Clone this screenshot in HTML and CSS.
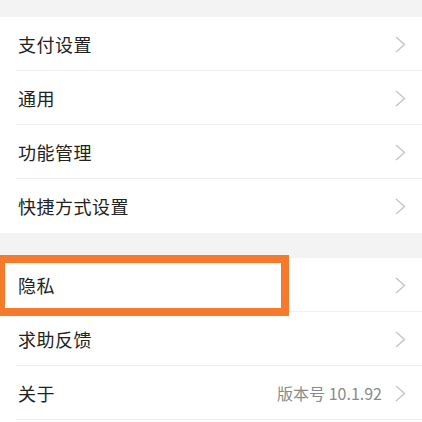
FILE: index.html
```html
<!DOCTYPE html>
<html lang="zh-CN">
<head>
<meta charset="utf-8">
<link rel="stylesheet" href="styles.css">
</head>
<body>
<div class="page">
  <div class="gap top"></div>
  <div class="group">
    <div class="row"><span class="label">支付设置</span><span class="right"><svg class="chev" viewBox="0 0 11 17"><path d="M1 1l8.5 7.5L1 16"/></svg></span></div>
    <div class="row"><span class="label">通用</span><span class="right"><svg class="chev" viewBox="0 0 11 17"><path d="M1 1l8.5 7.5L1 16"/></svg></span></div>
    <div class="row"><span class="label">功能管理</span><span class="right"><svg class="chev" viewBox="0 0 11 17"><path d="M1 1l8.5 7.5L1 16"/></svg></span></div>
    <div class="row"><span class="label">快捷方式设置</span><span class="right"><svg class="chev" viewBox="0 0 11 17"><path d="M1 1l8.5 7.5L1 16"/></svg></span></div>
  </div>
  <div class="gap mid"></div>
  <div class="group">
    <div class="row highlight"><span class="label">隐私</span><span class="right"><svg class="chev" viewBox="0 0 11 17"><path d="M1 1l8.5 7.5L1 16"/></svg></span><span class="mark"></span></div>
    <div class="row"><span class="label">求助反馈</span><span class="right"><svg class="chev" viewBox="0 0 11 17"><path d="M1 1l8.5 7.5L1 16"/></svg></span></div>
    <div class="row last"><span class="label">关于</span><span class="right"><span class="value">版本号 10.1.92</span><svg class="chev" viewBox="0 0 11 17"><path d="M1 1l8.5 7.5L1 16"/></svg></span></div>
  </div>
</div>
</body>
</html>
```
FILE: styles.css
```css
html, body {
  margin: 0;
  padding: 0;
  background: #ffffff;
}
body {
  font-family: "Noto Sans CJK SC", "Noto Sans", sans-serif;
  width: 422px;
  height: 422px;
  overflow: hidden;
}
.page {
  display: flex;
  flex-direction: column;
}
.gap {
  background: #f3f3f3;
}
.gap.top {
  height: 17px;
}
.gap.mid {
  height: 25px;
}
.group {
  display: flex;
  flex-direction: column;
  background: #ffffff;
}
.row {
  position: relative;
  height: 54px;
  box-sizing: border-box;
  display: flex;
  align-items: center;
  justify-content: space-between;
  padding: 0 16px 0 18px;
}
.row::after {
  content: "";
  position: absolute;
  left: 16px;
  right: 0;
  bottom: 0;
  height: 1px;
  background: #efefef;
}
.group .row:nth-child(4)::after {
  display: none;
}
.label {
  font-size: 18px;
  color: #222222;
  letter-spacing: 0.5px;
}
.right {
  display: flex;
  align-items: center;
  gap: 13px;
}
.value {
  font-size: 16px;
  color: #8a8a8a;
}
.chev {
  width: 11px;
  height: 17px;
  fill: none;
  stroke: #c6c6c6;
  stroke-width: 1.4;
}
.mark {
  position: absolute;
  z-index: 2;
  left: -3px;
  top: -3px;
  width: 276px;
  height: 45px;
  border: 8px solid #f57a2c;
}
```
